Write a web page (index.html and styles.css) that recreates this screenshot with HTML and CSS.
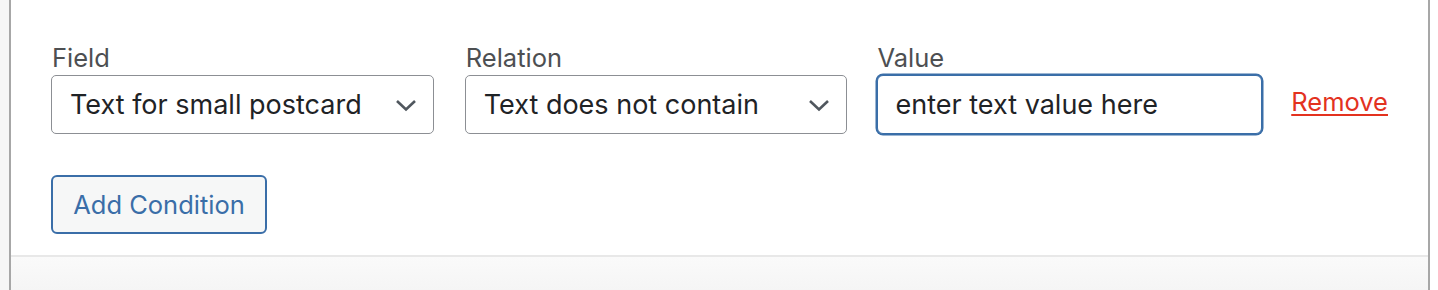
FILE: index.html
```html
<!DOCTYPE html>
<html lang="en">
<head>
<meta charset="utf-8">
<title>Conditions</title>
<link rel="stylesheet" href="styles.css">
</head>
<body>
<div class="page">
  <div class="panel">
    <div class="panel-body">
      <div class="condition-row">
        <div class="field-group field-col">
          <label class="field-label">Field</label>
          <div class="select-box">
            <span class="select-text">Text for small postcard</span>
            <svg class="chevron" width="22" height="13" viewBox="0 0 22 13"><path d="M2 2 L11 10.5 L20 2" fill="none" stroke="#50575e" stroke-width="2.6"/></svg>
          </div>
        </div>
        <div class="field-group relation-col">
          <label class="field-label">Relation</label>
          <div class="select-box">
            <span class="select-text">Text does not contain</span>
            <svg class="chevron" width="22" height="13" viewBox="0 0 22 13"><path d="M2 2 L11 10.5 L20 2" fill="none" stroke="#50575e" stroke-width="2.6"/></svg>
          </div>
        </div>
        <div class="field-group value-col">
          <label class="field-label">Value</label>
          <input class="text-input" type="text" value="enter text value here">
        </div>
        <a class="remove-link" href="#">Remove</a>
      </div>
      <button class="add-button" type="button">Add Condition</button>
    </div>
    <div class="panel-footer"></div>
  </div>
</div>
</body>
</html>
```

FILE: styles.css
```css
html, body {
  margin: 0;
  padding: 0;
  background: #ffffff;
  height: 290px;
  overflow: hidden;
}

.page {
  border-left: 9px solid #f6f6f6;
  width: 1421px;
  font-family: Inter, "Liberation Sans", Arial, sans-serif;
}

.panel {
  background: #ffffff;
  border-left: 2px solid #a7a7a7;
  border-right: 2px solid #a7a7a7;
}

.panel-body {
  padding: 43px 40px 21px 40px;
}

.condition-row {
  display: flex;
  align-items: flex-end;
}

.field-group {
  display: flex;
  flex-direction: column;
}

.field-col { width: 383px; margin-right: 31px; }
.relation-col { width: 382px; margin-right: 30px; }
.value-col { width: 386px; margin-right: 29px; }

.field-label {
  font-size: 25.5px;
  line-height: 30px;
  color: #4d4f52;
  margin-bottom: 2px;
  padding-left: 1px;
}

.select-box {
  box-sizing: border-box;
  height: 59px;
  border: 1.5px solid #8c8f94;
  border-radius: 5px;
  display: flex;
  align-items: center;
  justify-content: space-between;
  padding: 0 16px 0 18px;
  background: #fff;
}

.select-text {
  font-size: 27px;
  color: #1f2326;
}

.chevron {
  display: block;
  margin-top: 2px;
}

.text-input {
  box-sizing: border-box;
  height: 59px;
  width: 100%;
  margin: 0;
  border: 1.5px solid #3a6ea8;
  box-shadow: 0 0 0 1.5px #3a6ea8;
  border-radius: 6px;
  padding: 0 18px;
  font-family: inherit;
  font-size: 27px;
  color: #1f2326;
  outline: none;
  background: #fff;
}

.remove-link {
  font-size: 25.5px;
  color: #e3321f;
  text-decoration: underline;
  text-decoration-thickness: 2px;
  text-underline-offset: 3px;
  line-height: 59px;
  height: 59px;
  margin-bottom: 3px;
}

.add-button {
  display: block;
  box-sizing: border-box;
  margin-top: 41px;
  width: 216px;
  height: 59px;
  border: 2px solid #3a6ea8;
  border-radius: 6px;
  background: #f6f7f7;
  color: #3a6ea8;
  font-family: inherit;
  font-size: 25.5px;
  padding: 0;
  cursor: pointer;
}

.panel-footer {
  height: 40px;
  border-top: 2px solid #e8e8e8;
  background: linear-gradient(#fafafa, #f4f4f4);
}
```
